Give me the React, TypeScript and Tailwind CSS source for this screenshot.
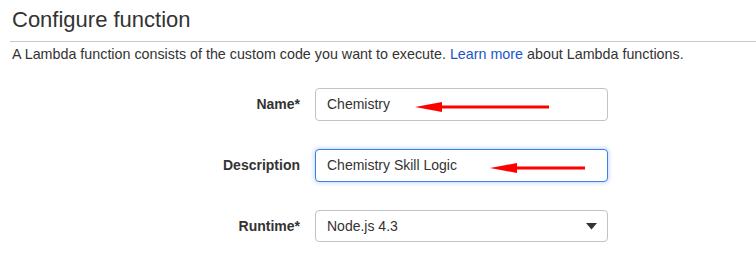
import React from 'react';

function RedArrow({ left, width }: { left: number; width: number }) {
  // red annotation arrow pointing left, drawn over the input
  return (
    <svg
      className="absolute top-[12px] pointer-events-none"
      style={{ left }}
      width={width}
      height={12}
      viewBox={`0 0 ${width} 12`}
    >
      <polygon points={`0,6 27,1 27,11`} fill="#ff0000" />
      <rect x={24} y={4.5} width={width - 24} height={3} fill="#ff0000" />
    </svg>
  );
}

function Row({
  label,
  children,
}: {
  label: string;
  children: React.ReactNode;
}) {
  return (
    <div className="flex items-center">
      <label className="w-[300px] text-right text-[14px] font-bold text-[#333]">
        {label}
      </label>
      <div className="ml-[15px] w-[293px]">{children}</div>
    </div>
  );
}

export default function App() {
  return (
    <div
      className="w-[756px] h-[263px] bg-white overflow-hidden text-[#333]"
      style={{ fontFamily: '"Liberation Sans", Arial, sans-serif' }}
    >
      <div className="pl-[12px] pt-[7px]">
        <h1 className="text-[22px] leading-[26px] text-[#333]">Configure function</h1>
      </div>
      <div className="ml-[10px] mt-[8px] h-px bg-[#c9c9c9]" />
      <p className="pl-[12px] pt-[2px] text-[14.3px] leading-[20px]">
        A Lambda function consists of the custom code you want to execute.{' '}
        <a href="#" className="text-[#1a56c8]">
          Learn more
        </a>{' '}
        about Lambda functions.
      </p>

      <div className="mt-[24px] flex flex-col gap-[28px]">
        <Row label="Name*">
          <div className="relative h-[33px] rounded-[4px] border border-[#c3c3c3] bg-white flex items-center pl-[11px] text-[14px]">
            Chemistry
            <RedArrow left={99} width={134} />
          </div>
        </Row>
        <Row label="Description">
          <div className="relative h-[33px] rounded-[4px] border border-[#3d7fe0] bg-white shadow-[0_0_4px_1px_rgba(80,140,240,0.35)] flex items-center pl-[11px] text-[14px]">
            Chemistry Skill Logic
            <RedArrow left={174} width={95} />
          </div>
        </Row>
        <Row label="Runtime*">
          <div className="relative h-[32px] rounded-[4px] border border-[#c3c3c3] bg-white flex items-center justify-between pl-[11px] pr-[10px] text-[14px]">
            <span>Node.js 4.3</span>
            <svg width="11" height="7" viewBox="0 0 11 7">
              <polygon points="0,0 11,0 5.5,6.5" fill="#333" />
            </svg>
          </div>
        </Row>
      </div>
    </div>
  );
}
